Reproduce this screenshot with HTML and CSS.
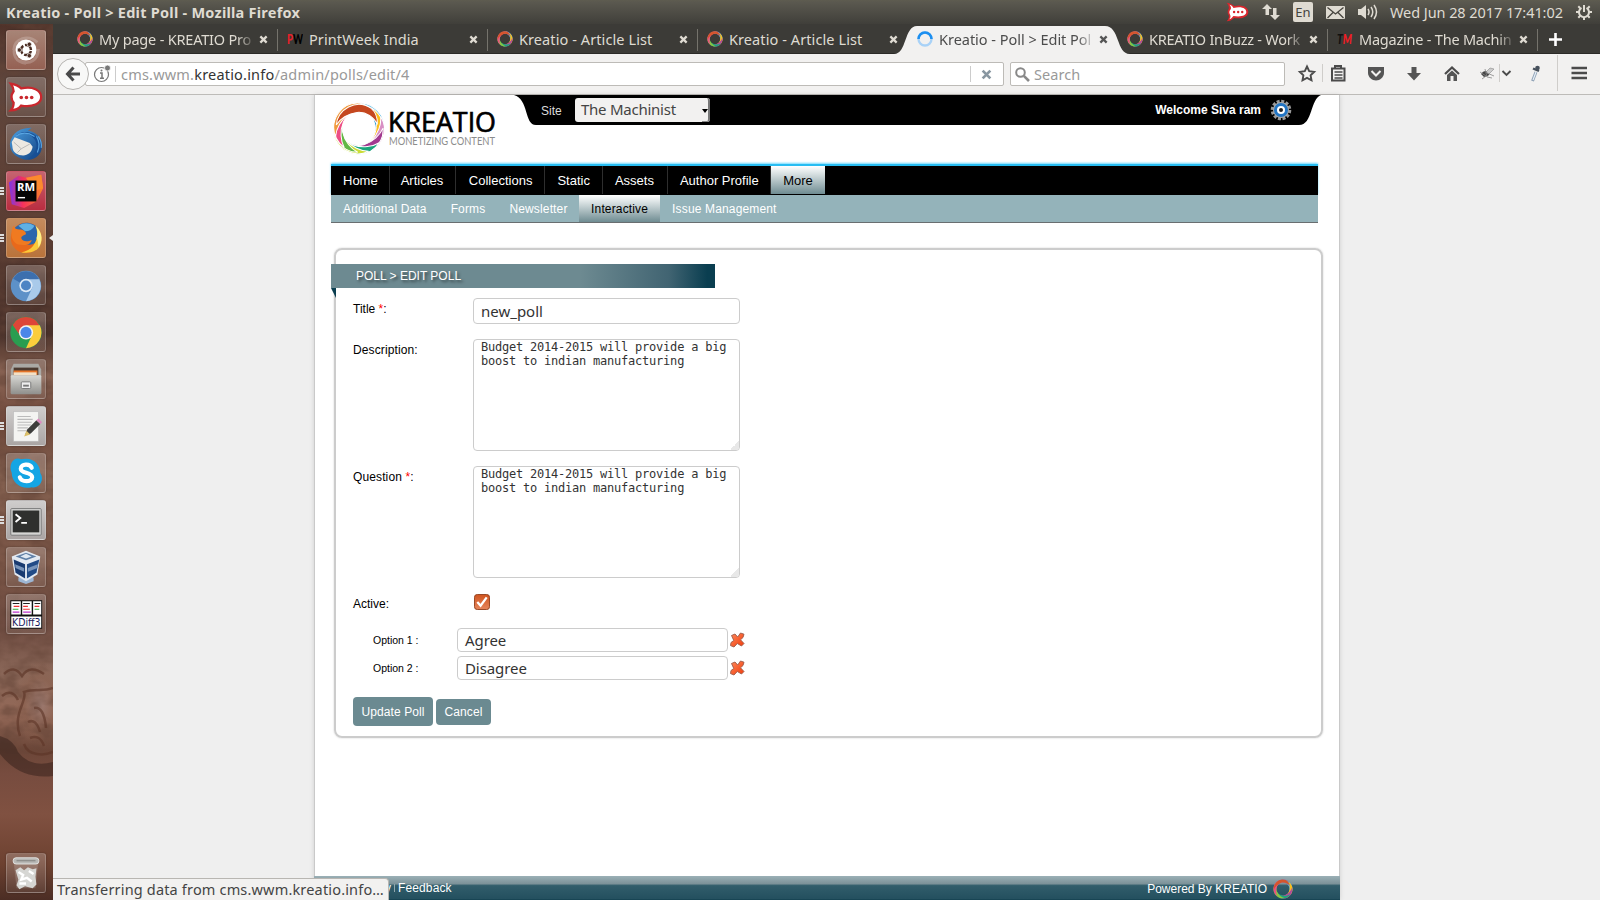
FILE: index.html
```html
<!DOCTYPE html>
<html lang="en">
<head>
<meta charset="utf-8">
<title>Kreatio - Poll &gt; Edit Poll</title>
<link rel="stylesheet" href="styles.css">
</head>
<body>
<svg class="defs" width="0" height="0">
  <defs>
    <filter id="grain" x="0" y="0" width="100%" height="100%"><feTurbulence type="fractalNoise" baseFrequency=".05 .08" numOctaves="3" seed="7"/><feColorMatrix values="0 0 0 0 .13  0 0 0 0 .06  0 0 0 0 .04  0 2.600 0 0 -.95"/></filter>
    <linearGradient id="chk" x1="0" y1="0" x2="0" y2="1"><stop offset="0" stop-color="#cf541f"/><stop offset="1" stop-color="#e6855b"/></linearGradient>
    <linearGradient id="red" x1="0" y1="0" x2="1" y2="1"><stop offset="0" stop-color="#ff8a5c"/><stop offset="1" stop-color="#f03a0a"/></linearGradient>
    <linearGradient id="steel" x1="0" y1="0" x2="0" y2="1"><stop offset="0" stop-color="#d8d8d4"/><stop offset="1" stop-color="#8f8f8c"/></linearGradient>
    <linearGradient id="jb" x1="0" y1="0" x2="1" y2="0"><stop offset="0" stop-color="#7a35e8"/><stop offset=".4" stop-color="#f5315d"/><stop offset="1" stop-color="#fb8628"/></linearGradient>
    <linearGradient id="bird" x1="0" y1="0" x2="1" y2="1"><stop offset="0" stop-color="#4da0e0"/><stop offset="1" stop-color="#0f3f80"/></linearGradient>
    <path id="lune" d="M-20-13C-12-27 10-30 20-14C23-8 22-2 19 4C19-4 14-13 5-16C-4-19-14-17-20-13Z"/>
    <symbol id="ring" viewBox="-26 -26 52 52">
      <g stroke="#fff" stroke-width="1">
      <use href="#lune" fill="#a65aa6"/>
      <use href="#lune" fill="#74c7e8" transform="rotate(36)"/>
      <use href="#lune" fill="#1c8ed3" transform="rotate(62) scale(.94)"/>
      <use href="#lune" fill="#fbbd1b" transform="rotate(90) scale(.96)"/>
      <use href="#lune" fill="#d88fc4" transform="rotate(118)"/>
      <use href="#lune" fill="#a2398f" transform="rotate(146) scale(.97)"/>
      <use href="#lune" fill="#1ba57b" transform="rotate(182)"/>
      <use href="#lune" fill="#cbdc35" transform="rotate(214)"/>
      <use href="#lune" fill="#62b846" transform="rotate(240) scale(.96)"/>
      <use href="#lune" fill="#ed4d85" transform="rotate(275) scale(.97)"/>
      <use href="#lune" fill="#f09a3e" transform="rotate(308)"/>
      <use href="#lune" fill="#c5471f" transform="rotate(336) scale(.93)"/>
      </g>
    </symbol>
    <symbol id="miniring" viewBox="-26 -26 52 52">
      <use href="#lune" fill="#a65aa6"/>
      <use href="#lune" fill="#4fb0e0" transform="rotate(45)"/>
      <use href="#lune" fill="#fbbd1b" transform="rotate(92)"/>
      <use href="#lune" fill="#b04aa0" transform="rotate(138)"/>
      <use href="#lune" fill="#1ba57b" transform="rotate(182)"/>
      <use href="#lune" fill="#8ac641" transform="rotate(228)"/>
      <use href="#lune" fill="#ed4d85" transform="rotate(275)"/>
      <use href="#lune" fill="#d4562c" transform="rotate(322)"/>
    </symbol>
    <symbol id="close" viewBox="0 0 10 10"><path d="M1.500 1.500l7 7M8.500 1.500l-7 7" stroke="currentColor" stroke-width="2.500"/></symbol>
    <symbol id="rocket" viewBox="0 0 34 30"><path d="M1 1C7 2 10 4 12 6C25 3 33 8 33 15S24 26 12 24C9 27 5 29 1 29C4 26 5 22 4 20C2 17 2 13 4 10C5 7 3 3 1 1Z" fill="#d9262c"/><path d="M5 4C9 5 10 7 11 9C24 6 30 10 30 15S23 23 11 21C9 23 8 25 5 26C7 23 7 21 6 19C4 16 5 13 7 11C8 9 7 6 5 4Z" fill="#fff"/><g fill="#d9262c"><circle cx="12" cy="15" r="1.800"/><circle cx="18" cy="15" r="1.800"/><circle cx="24" cy="15" r="1.800"/></g></symbol>
    <symbol id="redx" viewBox="0 0 16 16"><path d="M2.500 3.500L6 2L8.700 5L11.500 1L15 2.200L14 5.500L11.500 7.800L15 11.500L12.500 14L8.300 11.500L5 15L1.500 13.600L2 10.500L4.800 8.500Z" fill="url(#red)" stroke="#9c5a48" stroke-width=".9" stroke-linejoin="round"/></symbol>
  </defs>
</svg>

<header class="topbar">
  <div class="topbar-title">Kreatio - Poll &gt; Edit Poll - Mozilla Firefox</div>
  <div class="indicators">
    <svg width="23" height="20" viewBox="0 0 34 30" preserveAspectRatio="none"><use href="#rocket" width="34" height="30"/></svg>
    <svg width="18" height="18" viewBox="0 0 18 18" fill="#dfdbd2"><path d="M5 1L10 6H7V12H3.500V6H0ZM13 17L8 12H11V5H14.500V12H18Z"/></svg>
    <span class="lang">En</span>
    <svg width="19" height="13" viewBox="0 0 19 13"><rect width="19" height="13" rx="1" fill="#dfdbd2"/><path d="M1.500 1.500L9.500 8L17.500 1.500M1.500 12L7 6.500M17.500 12L12 6.500" fill="none" stroke="#46443e" stroke-width="1.300"/></svg>
    <svg width="20" height="16" viewBox="0 0 20 16"><path d="M0 5H3L8 1V15L3 11H0Z" fill="#dfdbd2"/><path d="M10 5Q12 8 10 11M13 3Q16.500 8 13 13M16 1Q21 8 16 15" fill="none" stroke="#dfdbd2" stroke-width="1.500"/></svg>
    <span class="clock">Wed Jun 28 2017 17:41:02</span>
    <svg width="16" height="16" viewBox="0 0 16 16" fill="none" stroke="#dfdbd2"><path d="M5.500 3.800A5 5 0 1 0 10.500 3.800" stroke-width="2"/><path d="M8 1V8" stroke-width="2"/><path d="M0 8H3M13 8H16M2.300 2.300L4.200 4.200M13.700 2.300L11.800 4.200M2.300 13.700L4.200 11.800M13.700 13.700L11.800 11.800M8 13V16" stroke-width="2"/></svg>
  </div>
</header>

<div class="desktop">
<aside class="launcher">
  <svg class="wallpaper" width="53" height="876" viewBox="0 0 53 876"><rect width="53" height="730" filter="url(#grain)" opacity=".55"/><path d="M0 712Q14 716 18 728Q30 744 53 738V752Q20 756 0 730Z" fill="#2c1a17" opacity=".45"/><g fill="none" stroke="#5c3426" stroke-width="2.500" opacity=".6"><path d="M20 712C12 690 28 676 24 668C34 664 44 668 53 664M24 720C28 732 44 732 53 728M28 698Q36 694 40 708M34 684Q44 682 46 704M30 714Q40 710 44 722"/><path d="M4 650Q14 640 22 652Q30 640 44 650M2 672Q12 664 18 676"/></g></svg>
  <div class="tile ubuntu"><svg viewBox="0 0 40 40"><g fill="none" stroke="#fff" stroke-opacity=".2" stroke-width="3"><path d="M7 20C8 8 22 3 32 12M20 34C9 33 5 25 9 14M33 19C33 30 24 37 13 31"/></g><circle cx="20" cy="20" r="11" fill="#fff"/><circle cx="20" cy="20" r="5.200" fill="none" stroke="#4a2c22" stroke-width="2.600" stroke-dasharray="9 1.890" stroke-dashoffset="-1"/><g fill="#4a2c22" stroke="#fff" stroke-width=".7"><circle cx="13" cy="20" r="2.300"/><circle cx="23.500" cy="14" r="2.300"/><circle cx="23.500" cy="26" r="2.300"/></g></svg></div>
  <div class="tile"><svg viewBox="0 0 40 40"><path d="M4 6C10 7 13 9 15 11C27 8 36 13 36 20S27 31 15 29C12 33 8 34 4 34C7 31 7 28 7 26C4 22 4 18 7 14C7 11 6 9 4 6Z" fill="#fff" stroke="#c9272d" stroke-width="2.400"/><g fill="#c9272d"><circle cx="15" cy="20.500" r="1.900"/><circle cx="20.500" cy="20.500" r="1.900"/><circle cx="26" cy="20.500" r="1.900"/></g></svg></div>
  <div class="tile"><svg viewBox="0 0 40 40"><path d="M3 20C5 8 14 3 26 3L22 6C33 7 39 17 36 27C33 35 25 38 17 36C9 34 3 28 3 20Z" fill="url(#bird)"/><path d="M5 18L8 13L24 19L27 23C26 29 22 32 17 32C11 32 7 29 6 25Z" fill="#ece9e2"/><path d="M7 18L15 25L24 20M15 25L11 29" fill="none" stroke="#aaa" stroke-width=".8"/><path d="M8 13C13 7 24 8 28 14C34 20 31 31 22 36C33 34 38 26 35 17C31 8 16 3 8 13Z" fill="#174f96"/><path d="M9 12Q18 5 29 12M31 12Q36 20 32 29M33 12Q37 18 36 24" fill="none" stroke="#5aa6e2" stroke-width="1.200"/></svg></div>
  <div class="tile run rm"><svg viewBox="0 0 40 40"><path d="M2 11L12 4L20 6L36 3L38 17L31 31L18 38L5 34Z" fill="url(#jb)"/><path d="M20 6L36 3L38 17L28 20Z" fill="#fb8a2e"/><rect x="9" y="9" width="22" height="22" fill="#050505"/><text x="10.500" y="20.500" class="rmtext" textLength="19" lengthAdjust="spacingAndGlyphs">RM</text><path d="M11.500 27H19" stroke="#fff" stroke-width="1.500"/></svg></div>
  <div class="tile run ff"><svg viewBox="0 0 40 40"><circle cx="20" cy="20" r="16" fill="#e8691b"/><path d="M7 11Q13 3 22 4Q31 5 34 13L30 25Q24 29 17 25L12 17Z" fill="#2c66ac"/><path d="M12 7Q20 2 29 7Q26 13 19 13Z" fill="#5fb0e4"/><path d="M7 7C8 10 10 11 13 11C17 11 20 13 20 16C18 17 15 18 15 20C16 24 22 24 26 22C25 27 19 28 15 27C11 28 6 24 5 19C4 14 5 10 7 7Z" fill="#f07a20"/><path d="M30 7C39 15 38 29 30 33C25 36 19 36 15 35C23 34 28 29 30 24C33 18 32 12 30 7Z" fill="#fbc93a"/><path d="M30 7C39 15 37 25 33 30C33 24 32 22 31 20C33 15 32 11 30 7Z" fill="#fdf08c"/></svg><i class="focus"></i></div>
  <div class="tile"><svg viewBox="0 0 40 40"><circle cx="20" cy="21" r="16" fill="#5d91c8"/><path d="M20 21L6.500 13.300A15.500 15.500 0 0 1 33.500 13.300Z" fill="#3c6fae"/><path d="M20 14H34A16 16 0 0 1 20 37L27 22Z" fill="#a9caea"/><circle cx="20" cy="20.500" r="7" fill="#dce9f6"/><circle cx="20" cy="20.500" r="5.300" fill="#4d84c4"/></svg></div>
  <div class="tile"><svg viewBox="0 0 40 40"><circle cx="20" cy="20.500" r="16.500" fill="#2a9d50"/><path d="M20 20.500L6 12.500A16 16 0 0 1 34 12.500Z" fill="#dd4638"/><path d="M20 13H34.500A16.500 16.500 0 0 1 20 37L26.500 23Z" fill="#fbcd3c"/><path d="M6 12.500L14 24L20 14Z" fill="#dd4638"/><circle cx="20" cy="20.500" r="7.500" fill="#f3f3f3"/><circle cx="20" cy="20.500" r="5.900" fill="#4a86e8"/></svg></div>
  <div class="tile"><svg viewBox="0 0 40 40"><path d="M7 4H33L36 10V35H4V10Z" fill="#aaa9a5"/><path d="M7 8H33V16H7Z" fill="#4b3a30"/><path d="M7 11H32V16H7Z" fill="#e57428"/><path d="M7 13H31V16H7Z" fill="#f3e0c5"/><rect x="4" y="16" width="32" height="20" rx="1" fill="url(#steel)"/><rect x="15" y="23" width="10" height="7" rx="1" fill="#eee" stroke="#777"/><path d="M17 27H23" stroke="#777" stroke-width="2"/></svg></div>
  <div class="tile run pale"><svg viewBox="0 0 40 40"><rect x="7" y="5" width="26" height="31" fill="#f4f4f2" stroke="#bbb" stroke-width=".6"/><path d="M11 10H25M11 13H27M11 16H26M11 19H25M11 22H22M11 25H20" stroke="#bbb" stroke-width="1.200"/><path d="M19 30L21 24L31 14L35 18L25 28Z" fill="#3e3e3c"/><path d="M31 14L33 12L37 16L35 18Z" fill="#dc8bc0"/><path d="M18 31L20.500 25L24.500 29Z" fill="#dcc06a"/></svg></div>
  <div class="tile"><svg viewBox="0 0 40 40"><path d="M20 5C29 5 35 12 35 20C40 27 34 37 26 35C15 38 5 30 5 20C1 11 7 2 15 5.500Z" fill="#14a5e4"/><path d="M26 14.500C24.500 10 14.500 10 14.500 15.500C14.500 21 26.500 18.500 26.500 24.500C26.500 30 15 30 13.500 24.500" fill="none" stroke="#fff" stroke-width="4.400" stroke-linecap="round"/></svg></div>
  <div class="tile run pale"><svg viewBox="0 0 40 40"><rect x="4" y="8" width="32" height="28" rx="1" fill="#d5d5d3" stroke="#777"/><rect x="6" y="10" width="28" height="23" fill="#2f302e"/><path d="M9 14L14 18L9 22M15 23H21" stroke="#fff" stroke-width="2" fill="none"/></svg></div>
  <div class="tile"><svg viewBox="0 0 40 40"><path d="M12 31L20 27L28 31V35L20 38L12 35Z" fill="#9db6d4"/><path d="M5 9L20 3L35 9L32 28L20 35L8 28Z" fill="#e3e9f1"/><path d="M7 12L19 17V32L9 26Z" fill="#183a70"/><path d="M34 12L21 17V32L31 26Z" fill="#214b87"/><path d="M9 9L20 5L31 9L20 13Z" fill="#5f7fa6"/><path d="M14 9L20 6L26 9L20 11Z" fill="#dfe8f2"/><path d="M8.500 17L18 21V25L9 21ZM32.500 17L22 21V25L32 21Z" fill="#7894ba"/></svg></div>
  <div class="tile"><svg viewBox="0 0 40 40"><rect x="3.500" y="5.500" width="33.500" height="30" fill="#111"/><path d="M4.500 6.500H14.500V20.500H4.500ZM16 6.500H26V20.500H16ZM27.500 6.500H36V20.500H27.500ZM4.500 22.500H36V34.500H4.500Z" fill="#fff"/><path d="M6 9H13M17 9H24M29 9H35" stroke="#222" stroke-width="1.200"/><path d="M7 12H13M17 12H22M29 12H34M17 15H24" stroke="#e33" stroke-width="1.200"/><path d="M6 15H12M29 15H34" stroke="#3a3" stroke-width="1.200"/><path d="M6 18H13M17 18H25" stroke="#b3c" stroke-width="1.200"/><text x="5.300" y="33" class="kdtext" textLength="30" lengthAdjust="spacingAndGlyphs">KDiff3</text></svg></div>
  <div class="tile trash"><svg viewBox="0 0 40 40"><path d="M7 7L10 36H30L33 7Z" fill="#fff" fill-opacity=".16"/><path d="M9 17L14 14L18 17L22 14L27 16L31 15L30 24L31 32L27 36L19 34L13 37L10 33L12 27Z" fill="#d6d6d3"/><path d="M12 19L17 22L15 27L21 25L26 29M23 18L28 21M13 31L20 31" stroke="#fff" stroke-width="2.500" fill="none"/><rect x="6.500" y="4" width="27" height="6.500" rx="3" fill="#b9b9b6" stroke="#e4e4e1"/><path d="M10 7H30" stroke="#8f8f8c" stroke-width="1.500"/></svg></div>
</aside>

<div class="browser">
  <nav class="tabs">
    <div class="tab"><svg class="fav"><use href="#miniring"/></svg><span class="tabtext fade t1">My page - KREATIO Pro</span><svg class="x"><use href="#close"/></svg></div>
    <div class="tab"><svg class="fav" viewBox="0 0 16 16"><text class="pw" x="0" y="13" textLength="16" lengthAdjust="spacingAndGlyphs"><tspan fill="#e8202a">P</tspan><tspan fill="#000">W</tspan></text></svg><span class="tabtext t2">PrintWeek India</span><svg class="x"><use href="#close"/></svg></div>
    <div class="tab"><svg class="fav"><use href="#miniring"/></svg><span class="tabtext t3">Kreatio - Article List</span><svg class="x"><use href="#close"/></svg></div>
    <div class="tab noline"><svg class="fav"><use href="#miniring"/></svg><span class="tabtext t3">Kreatio - Article List</span><svg class="x"><use href="#close"/></svg></div>
    <div class="tab active noline"><svg class="tabshape" width="236" height="28" viewBox="0 0 236 28"><path d="M0 28C13 28 10 0 23 0H211C226 0 222 28 236 28Z" fill="#f2f1f0"/></svg><svg class="fav" viewBox="0 0 16 16"><circle cx="8" cy="8" r="6.500" fill="none" stroke="#a9d2f7" stroke-width="2.300"/><path d="M1.500 8A6.500 6.500 0 0 1 14.500 8" fill="none" stroke="#1d8ff0" stroke-width="2.600"/></svg><span class="tabtext fade t5">Kreatio - Poll &gt; Edit Pol</span><svg class="x"><use href="#close"/></svg></div>
    <div class="tab"><svg class="fav"><use href="#miniring"/></svg><span class="tabtext fade t6">KREATIO InBuzz - Work</span><svg class="x"><use href="#close"/></svg></div>
    <div class="tab"><svg class="fav" viewBox="0 0 16 16"><text class="tm" x="0" y="13" textLength="15" lengthAdjust="spacingAndGlyphs"><tspan fill="#111">T</tspan><tspan fill="#f01c24">M</tspan></text></svg><span class="tabtext fade t7">Magazine - The Machin</span><svg class="x"><use href="#close"/></svg></div>
    <svg class="plus" width="13" height="13" viewBox="0 0 14 14"><path d="M7 0V14M0 7H14" stroke="#fff" stroke-width="2.800"/></svg>
  </nav>

  <div class="toolbar">
    <div class="back"><svg width="16" height="16" viewBox="0 0 16 16"><path d="M8.500 1.500L2.500 8L8.500 14.500M3 8H15" fill="none" stroke="#4a4a4a" stroke-width="3"/></svg></div>
    <div class="urlbar">
      <svg class="info" width="18" height="18" viewBox="0 0 18 18"><circle cx="8.500" cy="9.500" r="7" fill="none" stroke="#777" stroke-width="1.200"/><path d="M7 8H9V13M7 13.300H11" fill="none" stroke="#777" stroke-width="1.500"/><circle cx="8.500" cy="5.500" r="1" fill="#777"/><circle cx="14.500" cy="3" r="3" fill="#777" stroke="#fff" stroke-width=".8"/></svg>
      <i class="usep"></i>
      <span class="url">cms.wwm.<b>kreatio.info</b>/admin/polls/edit/4</span>
      <i class="usep stopsep"></i>
      <svg class="stop" width="11" height="11"><use href="#close"/></svg>
    </div>
    <div class="search"><svg width="15" height="15" viewBox="0 0 15 15"><circle cx="5.500" cy="5.500" r="4.300" fill="none" stroke="#888" stroke-width="2"/><path d="M8.800 8.800L14 14" stroke="#888" stroke-width="2.600"/></svg><span>Search</span></div>
    <div class="tools">
      <svg width="310" height="38" viewBox="1290 58 310 38" class="toolsvg" fill="none" stroke="#4b4b4b">
        <path d="M1307 69.500l2.200 4.600 5 .7-3.600 3.500.9 5-4.500-2.400-4.500 2.400.9-5-3.600-3.500 5-.7z" stroke-width="1.900"/>
        <path d="M1322.500 67V85M1499.500 67V85M1557.500 58V94" stroke="#cfcdca"/>
        <rect x="1332" y="71.500" width="12.500" height="12" stroke-width="2"/><path d="M1335 71V69H1341V71" stroke-width="2"/><path d="M1334.500 75H1342.500M1334.500 78H1342.500M1334.500 81H1342.500" stroke-width="1.300"/>
        <path d="M1368 70H1384V76C1384 80 1380 83.500 1376 83.500S1368 80 1368 76Z" fill="#555" stroke="none"/><path d="M1371.500 74L1376 78.500L1380.500 74" stroke="#f2f1f0" stroke-width="2"/>
        <path d="M1411.500 70H1416.500V76H1421L1414 83.500L1407 76H1411.500Z" fill="#555" stroke="none"/>
        <path d="M1445 77L1452 70.500L1459 77" stroke-width="2.200"/><path d="M1447 78L1452 73.500L1457 78V84H1453.500V79H1450.500V84H1447Z" fill="#555" stroke="none"/>
        <path d="M1481 77Q1484 72 1489 75Q1491 79 1484 80Z" fill="#444" stroke="none"/><path d="M1480 75L1486 79L1482 82M1485 72L1487 80L1492 81M1487 76L1494 79" stroke="#888" stroke-width=".8"/><path d="M1486 75L1490 71L1494 72L1489 77Z" fill="#ccc" stroke="#888" stroke-width=".6"/>
        <path d="M1502.500 74L1506.500 78L1510.500 74" stroke-width="1.900"/>
        <path d="M1536 75L1532.500 84" stroke="#8fa2b6" stroke-width="3"/><path d="M1536 75L1533 83" stroke="#e9f1f8" stroke-width="1.200"/><path d="M1533 71.500L1539 74" stroke="#47515c" stroke-width="2.400"/><circle cx="1537.500" cy="71" r="2.300" fill="#47515c" stroke="none"/>
        <path d="M1571.500 71H1587M1571.500 76H1587M1571.500 81H1587" stroke-width="2.700"/>
      </svg>
    </div>
  </div>

  <main class="viewport">
    <div class="page">
      <div class="head">
        <svg class="logo" width="170" height="56" viewBox="331 100 170 56"><use href="#ring" x="332" y="101.500" width="54" height="54"/><text class="kreatio" x="388" y="132" textLength="108" lengthAdjust="spacingAndGlyphs">KREATIO</text><text class="monet" x="389" y="145" textLength="106" lengthAdjust="spacingAndGlyphs">MONETIZING CONTENT</text></svg>
        <div class="sitebar">
          <svg class="barshape" width="807" height="31" viewBox="0 0 807 31"><path d="M0 0H807C796 4 799 30 785 30H22C10 30 15 4 0 0Z" fill="#000"/></svg>
          <span class="site">Site</span>
          <div class="select"><span>The Machinist</span><i></i></div>
          <strong class="welcome">Welcome Siva ram</strong>
          <svg class="gear" width="22" height="22" viewBox="-11 -11 22 22"><circle r="8.800" fill="none" stroke="#999" stroke-width="3" stroke-dasharray="3 1.600"/><circle r="8" fill="#aaa"/><circle r="5.500" fill="#fff" stroke="#2275c4" stroke-width="3"/><circle r="2" fill="#222"/></svg>
        </div>
      </div>
      <nav class="nav"><a class="home">Home</a><a>Articles</a><a class="coll">Collections</a><a>Static</a><a class="assets">Assets</a><a class="author">Author Profile</a><a class="on">More</a></nav>
      <nav class="subnav"><a>Additional Data</a><a>Forms</a><a class="news">Newsletter</a><a class="on">Interactive</a><a>Issue Management</a></nav>

      <section class="panel">
        <h1 class="ribbon">POLL &gt; EDIT POLL</h1>
        <div class="row title"><label>Title <em>*</em>:</label><div class="input">new_poll</div></div>
        <div class="row area"><label>Description:</label><div class="textarea">Budget 2014-2015 will provide a big<br>boost to indian manufacturing<i class="grip"></i></div></div>
        <div class="row area"><label>Question <em>*</em>:</label><div class="textarea">Budget 2014-2015 will provide a big<br>boost to indian manufacturing<i class="grip"></i></div></div>
        <div class="row active-row"><label>Active:</label><svg class="check" width="16" height="16" viewBox="0 0 17 17"><rect x=".5" y=".5" width="16" height="16" rx="3" fill="url(#chk)" stroke="#93401d"/><path d="M3.500 8.500L7 12.500L13.500 3.500" fill="none" stroke="#fff" stroke-width="2.400"/></svg></div>
        <div class="option"><label>Option 1 :</label><div class="input">Agree</div><svg width="16" height="16"><use href="#redx"/></svg></div>
        <div class="option"><label>Option 2 :</label><div class="input">Disagree</div><svg width="16" height="16"><use href="#redx"/></svg></div>
        <div class="actions"><button class="btn update">Update Poll</button><button class="btn cancel">Cancel</button></div>
      </section>

      <footer class="foot"><span class="feedback"><b>y</b><i></i>Feedback</span><span class="powered">Powered By KREATIO<svg width="20" height="20"><use href="#miniring"/></svg></span></footer>
    </div>
    <div class="status">Transferring data from cms.wwm.kreatio.info…</div>
  </main>
</div>
</div>
</body>
</html>
```

FILE: styles.css
```css
* { box-sizing: border-box; }
body { margin: 0; width: 1600px; height: 900px; overflow: hidden; display: flex; flex-direction: column; font-family: "Liberation Sans", Arial, sans-serif; font-size: 12px; color: #000; }
svg { display: block; flex: none; }
.defs { position: absolute; }

/* desktop top panel */
.topbar { height: 24px; flex: none; display: flex; justify-content: space-between; align-items: center; padding: 0 8px 0 6px; background: linear-gradient(#5e5c50, #5a584f 10%, #403f3a); color: #dfdbd2; font-family: "Noto Sans", sans-serif; white-space: nowrap; }
.topbar-title { font-weight: 700; font-size: 14.500px; letter-spacing: 0.25px; line-height: 22px; padding-bottom: 1px; }
.indicators { display: flex; align-items: center; }
.lang { width: 20px; height: 20px; margin: 0 13px; background: #dfdbd2; border-radius: 2px; color: #46443e; font-size: 13px; line-height: 20px; text-align: center; }
.indicators svg:first-child { margin-right: 13px; }
.indicators svg:nth-of-type(3) { margin-right: 13px; }
.clock { font-size: 14.500px; line-height: 22px; padding-bottom: 1px; width: 174px; margin: 0 12px 0 12px; letter-spacing: -0.07px; }

.desktop { flex: 1; display: flex; min-height: 0; }

/* launcher */
.launcher { position: relative; width: 53px; flex: none; padding: 6px 0 7px 6px; display: flex; flex-direction: column; gap: 7px; background: radial-gradient(ellipse 26px 44px at 40px 680px, rgba(160,128,120,.8), rgba(138,96,78,.5) 60%, transparent), linear-gradient(#4f3229 0, #5f463d 60px, #5b3d33 200px, #483029 310px, #8b6555 350px, #6d4639 400px, #83604f 450px, #7b5647 540px, #6e4b40 600px, #8b6859 650px, #936857 690px, #6b4638 726px, #774c3f 750px, #805141 790px, #6d4130 840px, #4b2d24 876px); }
.wallpaper { position: absolute; left: 0; top: 0; }
.tile { position: relative; width: 40px; height: 40px; flex: none; border-radius: 3px; border: 1px solid rgba(255,255,255,.2); background: linear-gradient(rgba(255,255,255,.22), rgba(255,255,255,.07)); box-shadow: 0 0 2px rgba(0,0,0,.35); }
.tile svg { width: 38px; height: 38px; }
.ubuntu { background: linear-gradient(#a78476, #956153); }
.rm { background: linear-gradient(#c56370, #b92d40); }
.ff { background: linear-gradient(#c48b5d, #b9733b); }
.pale { background: linear-gradient(#cfcdcc, #aaa5a4); }
.trash { margin-top: auto; }
.run::before { content: ""; position: absolute; left: -7px; top: 15px; width: 4px; height: 8px; background: repeating-linear-gradient(#ddd 0 2px, transparent 2px 3px); }
.focus { position: absolute; left: 42px; top: 16px; border: 3px solid transparent; border-right: 4px solid #eee; border-left: 0; }
.rmtext { font: 700 12px "Open Sans", sans-serif; fill: #fff; }
.kdtext { font: 11px "DejaVu Sans", sans-serif; fill: #1b1b5e; }

/* browser tabs */
.browser { flex: 1; min-width: 0; display: flex; flex-direction: column; }
.tabs { height: 30px; flex: none; display: flex; padding-left: 15px; background: #3c3b37; border-bottom: 1px solid #2b2a27; }
.tab { position: relative; width: 210px; height: 30px; flex: none; display: flex; align-items: center; padding-left: 9px; color: #dfdbd2; }
.tab::after { content: ""; position: absolute; right: 0; top: 5px; width: 1px; height: 22px; background: #75736c; }
.tab.noline::after { display: none; }
.fav { width: 16px; height: 16px; position: relative; }
.tabtext { position: relative; width: 153px; margin: -1px 0 0 6px; font: 14.500px/20px "Noto Sans", sans-serif; white-space: nowrap; }
.fade { -webkit-mask-image: linear-gradient(90deg, #000 138px, rgba(0,0,0,.15) 154px); mask-image: linear-gradient(90deg, #000 138px, rgba(0,0,0,.15) 154px); }
.x { width: 9px; height: 9px; margin-left: 7px; position: relative; color: #dfdbd2; }
.active { color: #4c4c4c; z-index: 1; }
.active .x { color: #555; }
.tabshape { position: absolute; left: -14px; top: 2px; }
.t1 { letter-spacing: -0.2px; }
.t2 { letter-spacing: 0.09px; }
.t3 { letter-spacing: 0.09px; }
.t5 { letter-spacing: -0.02px; }
.t6 { letter-spacing: -0.25px; }
.t7 { letter-spacing: -0.22px; }
.plus { margin: 9px 0 0 11px; }
.pw { font: 900 13px Lato, sans-serif; stroke: currentColor; stroke-width: 0; }
.tm { font: italic 900 13px Lato, sans-serif; }

/* toolbar */
.toolbar { height: 41px; flex: none; display: flex; align-items: center; padding-left: 4px; background: #f2f1f0; border-bottom: 1px solid #bdbbb8; }
.back { width: 32px; height: 32px; flex: none; z-index: 1; border: 1px solid #b5b3b0; border-radius: 50%; background: #f8f8f7; display: grid; place-items: center; }
.urlbar { width: 919px; height: 24px; margin-left: -4px; padding-left: 7px; display: flex; align-items: center; background: #fff; border: 1px solid #bdbbb7; border-radius: 2px; }
.usep { width: 1px; height: 16px; margin: 0 6px 0 4px; background: #ccc; flex: none; }
.url { flex: 1; margin-left: -1px; font: 14.500px/20px "Noto Sans", sans-serif; letter-spacing: 0.2px; color: #999; }
.url b { font-weight: 400; color: #333; }
.stopsep { margin: 0 10px; }
.stop { color: #8997a1; margin-right: 11px; }
.search { width: 275px; height: 24px; margin-left: 6px; padding-left: 4px; display: flex; align-items: center; gap: 4px; background: #fff; border: 1px solid #bdbbb7; border-radius: 2px; color: #999; font: 14.500px/20px "Noto Sans", sans-serif; letter-spacing: 0.05px; }
.tools { flex: 1; margin-left: 5px; overflow: hidden; }
.toolsvg { width: 310px; height: 38px; }

/* site page */
.viewport { position: relative; flex: 1; min-height: 0; display: flex; background: #efefef; padding-left: 261px; }
.page { width: 1026px; display: flex; flex-direction: column; background: #fff; border: 1px solid #c9c9c9; border-width: 0 1px; box-shadow: 0 0 5px rgba(0,0,0,.13); }
.head { height: 69px; flex: none; display: flex; padding-left: 16px; }
.logo { margin-top: 5px; }
.kreatio { font: 28px "Open Sans", sans-serif; fill: #000; stroke: #000; stroke-width: .7px; }
.monet { font: 10.500px Lato, sans-serif; fill: #8c8c8c; }
.sitebar { position: relative; width: 807px; height: 31px; margin-left: 13px; display: flex; padding-left: 27px; color: #fff; }
.sitebar > * { position: relative; }
.sitebar > .barshape { position: absolute; left: 0; top: 0; }
.site { width: 34px; line-height: 32px; color: #ddd; }
.select { display: flex; width: 135px; height: 24px; margin-top: 3px; padding-left: 6px; background: #f2f1f0; border-radius: 3px; color: #444; font: 15px/23px "Noto Sans", sans-serif; letter-spacing: -0.25px; white-space: nowrap; }
.select i { margin-left: auto; width: 8px; border-right: 2px solid #777; border-bottom: 1px solid #888; border-radius: 0 3px 3px 0; position: relative; }
.select i::after { content: ""; position: absolute; left: 0; top: 11px; border: 3px solid transparent; border-top: 4px solid #000; border-bottom: 0; }
.welcome { margin-left: auto; line-height: 30px; }
.gear { margin: 4px 29px 0 9px; }
.nav { height: 31px; margin: 0 21px 0 16px; flex: none; display: flex; background: #000; border-top: 2px solid #27bdf2; box-shadow: 0 -1px 2px #6cd9ff; }
.nav a { padding: 1px 12px 0; color: #fff; font-size: 13px; line-height: 28px; height: 28px; border-right: 1px solid #2e2e2e; }
.nav .home { padding-right: 11px; margin-right: -1px; }
.nav .coll { padding-left: 12.500px; }
.nav .assets { padding-right: 13px; }
.nav .author { padding-right: 11.500px; }
.nav a.on, .subnav a.on { color: #000; background: linear-gradient(#fff, #dce4e5 25%, #6f8c92); border: 0; }
.subnav { height: 28px; margin: 0 21px 0 16px; flex: none; display: flex; background: #94b3ba; border-bottom: 1px solid #696e70; color: #fff; letter-spacing: 0.15px; }
.subnav a { padding: 1px 12px 0; line-height: 27px; }
.subnav .news { padding-right: 11.500px; }
.panel { width: 989px; height: 490px; margin: 25px 0 0 19px; flex: none; border: 2px solid #ccc; border-radius: 8px; box-shadow: 0 0 2px #ccc; padding: 14px 0 0 17px; }
.ribbon { position: relative; width: 384px; height: 24px; margin: 0 0 10px -22px; padding-left: 25px; font-weight: 400; font-size: 12px; line-height: 24px; color: #fff; text-shadow: 2px 2px 3px rgba(0,0,0,.55); background: linear-gradient(90deg, #6d8a91 65%, #416472 88%, #0a3e50 98%); }
.ribbon::after { content: ""; position: absolute; left: 0; top: 24px; border-top: 10px solid #0a3e50; border-left: 5px solid transparent; }
.row { display: flex; }
.row label { width: 120px; }
em { color: red; font-style: normal; }
.input { border: 1px solid #ccc; border-radius: 4px; padding-left: 7px; color: #333; font: 15px/25px "Noto Sans", sans-serif; }
.row .input { width: 267px; height: 26px; }
.title { height: 41px; line-height: 22px; }
.area { height: 127px; line-height: 22px; letter-spacing: 0.12px; }
.textarea { position: relative; width: 267px; height: 112px; border: 1px solid #ccc; border-radius: 4px; padding-left: 7px; color: #333; font: 12px/14px "DejaVu Sans Mono", monospace; letter-spacing: -0.22px; white-space: nowrap; }
.grip { position: absolute; right: 0; bottom: 0; width: 9px; height: 9px; border-radius: 0 0 3px 0; background: linear-gradient(135deg, transparent 50%, #e8e8e8 50%); }
.active-row { height: 35px; line-height: 22px; }
.check { margin: 1px 0 0 1px; }
.option { display: flex; align-items: center; height: 24px; margin-bottom: 4px; padding-left: 20px; font-size: 10.500px; gap: 2px; }
.option label { width: 82px; }
.option .input { width: 271px; height: 24px; line-height: 23px; letter-spacing: -0.08px; }
.option svg { margin-left: -1px; }
.actions { display: flex; align-items: center; gap: 3px; margin-top: 17px; height: 29px; }
.btn { border: 0; padding: 0; border-radius: 4px; background: #6b8a91; color: #fff; font: 12px "Liberation Sans", Arial, sans-serif; letter-spacing: 0.1px; }
.update { width: 80px; height: 29px; }
.cancel { width: 55px; height: 26px; }
.foot { height: 24px; margin: auto -1px 0; flex: none; display: flex; justify-content: space-between; padding: 0 47px 0 71px; color: #fff; background: linear-gradient(#9bb0b6, #7c9299 32%, #315d6b 40%, #24505f 94%, #123f4e); }
.feedback { display: flex; align-items: center; gap: 3px; letter-spacing: 0.1px; }
.feedback b { font-weight: 400; }
.feedback i { width: 1px; height: 8px; background: #8fa6ae; }
.powered { display: flex; align-items: center; gap: 6px; padding-top: 2px; }
.status { position: absolute; left: 0; bottom: 0; width: 336px; height: 22px; border: 1px solid #b8b6b2; border-width: 1px 1px 0 0; border-radius: 0 4px 0 0; background: #f2f1f0; color: #444; padding-left: 4px; font: 14.500px/20px "Noto Sans", sans-serif; letter-spacing: 0.17px; white-space: nowrap; }
```
